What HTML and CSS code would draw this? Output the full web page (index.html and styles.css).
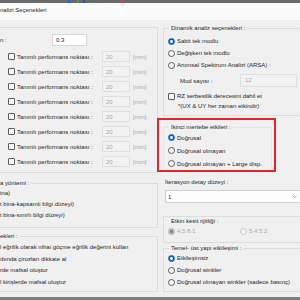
FILE: index.html
```html
<!DOCTYPE html>
<html lang="tr">
<head>
  <meta charset="UTF-8">
  <title>Analizi Seçenekleri</title>
  <link rel="stylesheet" href="styles.css">
</head>
<body>
  <div class="desk-top"></div>
  <div class="titlebar">nalizi Seçenekleri</div>

  <div class="dialog">
    <!-- SOL SÜTUN -->
    <div class="col-left">
      <div class="group g-perf">
        <div class="row-n">
          <span class="lbl-n">n :</span>
          <span class="input">0.3</span>
        </div>
        <div class="perf-list">
          <div class="perf-row"><span class="check"></span><span class="perf-lbl">Tanımlı performans noktası :</span><span class="input off">20</span><span class="unit">[mm]</span></div>
          <div class="perf-row"><span class="check"></span><span class="perf-lbl">Tanımlı performans noktası :</span><span class="input off">20</span><span class="unit">[mm]</span></div>
          <div class="perf-row"><span class="check"></span><span class="perf-lbl">Tanımlı performans noktası :</span><span class="input off">20</span><span class="unit">[mm]</span></div>
          <div class="perf-row"><span class="check"></span><span class="perf-lbl">Tanımlı performans noktası :</span><span class="input off">20</span><span class="unit">[mm]</span></div>
          <div class="perf-row"><span class="check"></span><span class="perf-lbl">Tanımlı performans noktası :</span><span class="input off">20</span><span class="unit">[mm]</span></div>
          <div class="perf-row"><span class="check"></span><span class="perf-lbl">Tanımlı performans noktası :</span><span class="input off">20</span><span class="unit">[mm]</span></div>
          <div class="perf-row"><span class="check"></span><span class="perf-lbl">Tanımlı performans noktası :</span><span class="input off">20</span><span class="unit">[mm]</span></div>
          <div class="perf-row"><span class="check"></span><span class="perf-lbl">Tanımlı performans noktası :</span><span class="input off">20</span><span class="unit">[mm]</span></div>
        </div>
      </div>

      <div class="group g-method">
        <span class="group-title">a yöntemi :</span>
        <div class="list">
          <div class="item">ina)</div>
          <div class="item">t bina-kapsamlı bilgi düzeyi)</div>
          <div class="item">t bina-sınırlı bilgi düzeyi)</div>
        </div>
      </div>

      <div class="group g-extra">
        <span class="group-title">ekleri :</span>
        <div class="list">
          <div class="item tall">l eğrilik olarak nihai göçme eğrilik değerini kullan</div>
          <div class="item tall">ıbında çirozları dikkate al</div>
          <div class="item tall">rde mafsal oluştur</div>
          <div class="item tall">l kirişlerde mafsal oluştur</div>
        </div>
      </div>
    </div>

    <!-- SAĞ SÜTUN -->
    <div class="col-right">
      <div class="group g-dyn">
        <span class="group-title">Dinamik analiz seçenekleri :</span>
        <div class="radios">
          <div class="opt"><span class="radio on"></span>Sabit tek modlu</div>
          <div class="opt"><span class="radio"></span>Değişken tek modlu</div>
          <div class="opt"><span class="radio"></span>Artımsal Spektrum Analizi (ARSA) :</div>
        </div>
        <div class="mod-row">
          <span class="mod-lbl">Mod sayısı :</span>
          <span class="input off wide">12</span>
        </div>
        <div class="rz-row"><span class="check"></span>RZ serbestlik derecesini dahil et</div>
        <div class="note">*(UX &amp; UY her zaman etkindir)</div>
      </div>

      <div class="marked">
        <div class="group g-second">
          <span class="group-title">İkinci mertebe etkileri :</span>
          <div class="opt big"><span class="radio on"></span>Doğrusal</div>
          <div class="opt big"><span class="radio"></span>Doğrusal olmayan</div>
          <div class="opt big"><span class="radio"></span>Doğrusal olmayan + Large disp.</div>
        </div>
      </div>

      <div class="iter-lbl">İterasyon detay düzeyi :</div>
      <div class="combo">
        <span>1</span>
        <svg width="5" height="3" viewBox="0 0 5 3"><path d="M0.5 0.5 L2.5 2.5 L4.5 0.5" fill="none" stroke="#8a8a8a" stroke-width="0.8"/></svg>
      </div>

      <div class="group g-rij">
        <span class="group-title">Etkin kesit rijitliği :</span>
        <div class="rij-row">
          <div class="opt dis first"><span class="radio dis on"></span>4.5.8.1</div>
          <div class="opt dis"><span class="radio dis"></span>5.4.5.2</div>
        </div>
      </div>

      <div class="group g-temel">
        <span class="group-title">Temel- üst yapı etkileşimi :</span>
        <div class="opt"><span class="radio on"></span>Etkileşimsiz</div>
        <div class="opt"><span class="radio"></span>Doğrusal winkler</div>
        <div class="opt"><span class="radio"></span>Doğrusal olmayan winkler (sadece basınç)</div>
      </div>
    </div>
  </div>

  <div class="desk-bottom"></div>
</body>
</html>
```

FILE: styles.css
```css
body {
  margin: 0;
  width: 300px;
  height: 300px;
  overflow: hidden;
  background-color: #f0f0f0;
  font-family: "Liberation Sans", Arial, sans-serif;
  font-size: 6px;
  color: #262626;
  display: flex;
  flex-direction: column;
}

.desk-top {
  height: 3px;
  flex-shrink: 0;
  background: linear-gradient(90deg, #6a6a6a 0 68px, #3b5fc0 68px 71px, #6a6a6a 71px 77px, #4aa04a 77px 79px, #6a6a6a 79px 83px, #2a4fb0 83px 85px, #6a6a6a 85px 121px, #d04a4a 121px 123px, #6a6a6a 123px);
}

.titlebar {
  height: 17px;
  line-height: 14px;
  background-color: #fbfbfb;
  flex-shrink: 0;
}

.dialog {
  display: flex;
  gap: 5px;
  padding-top: 7px;
}

.col-left {
  width: 158px;
  flex-shrink: 0;
}

.col-right {
  width: 150px;
  flex-shrink: 0;
  margin-top: 1px;
}

/* grup kutuları */
.group {
  border: 1px solid #dcdcdc;
}

.col-left .group {
  border-left: none;
}

.group-title {
  display: block;
  width: fit-content;
  margin-top: -5px;
  line-height: 8px;
  padding: 0 2px;
  background-color: #f0f0f0;
}

.col-left .group-title {
  padding-left: 0;
}

.col-right .group-title {
  margin-left: 1px;
}

/* kontroller */
.input {
  display: inline-block;
  box-sizing: border-box;
  height: 12px;
  line-height: 10px;
  padding-left: 3px;
  border: 1px solid #d6d6d6;
  background-color: #fff;
}

.input.off {
  color: #a8a8a8;
  background-color: #f2f2f2;
  border-color: #dedede;
  width: 28px;
}

.check {
  display: inline-block;
  box-sizing: border-box;
  width: 7px;
  height: 7px;
  border: 1px solid #5a5a5a;
  border-radius: 1px;
  background-color: #fafafa;
  flex-shrink: 0;
}

.radio {
  display: inline-block;
  box-sizing: border-box;
  width: 7px;
  height: 7px;
  border: 1px solid #5a5a5a;
  border-radius: 50%;
  background-color: #fafafa;
  flex-shrink: 0;
}

.radio.on {
  border-color: #0a5fb4;
  background: radial-gradient(circle, #fff 0 1.2px, #0a5fb4 1.7px);
}

.radio.dis {
  border-color: #c4c4c4;
  background-color: #f4f4f4;
}

.radio.dis.on {
  border-color: #a9a9a9;
  background: radial-gradient(circle, #808080 0 1.3px, #c9c9c9 1.8px);
}

.opt {
  height: 12px;
  display: flex;
  align-items: center;
  gap: 2px;
}

.opt.big {
  height: 13px;
}

.opt.dis {
  color: #a8a8a8;
}

/* sol: performans noktaları */
.g-perf {
  padding: 5px 0 3px;
}

.row-n {
  height: 14px;
  display: flex;
  align-items: center;
}

.lbl-n {
  width: 52px;
}

.row-n .input {
  width: 35px;
}

.perf-list {
  margin-top: 2px;
}

.perf-row {
  height: 15px;
  display: flex;
  align-items: center;
  padding-left: 8px;
}

.perf-lbl {
  width: 85px;
  padding-left: 2px;
}

.perf-row .input {
  height: 11px;
}

.unit {
  margin-left: 3px;
  color: #a8a8a8;
}

.g-method {
  margin-top: 10px;
  padding-bottom: 6px;
}

.g-method .list {
  margin-top: 1px;
}

.item {
  height: 11px;
  line-height: 11px;
  white-space: nowrap;
}

.item.tall {
  height: 11.5px;
  line-height: 11.5px;
}

.g-extra {
  margin-top: 8px;
  padding-bottom: 3px;
}

.g-extra .list {
  margin-top: 2px;
}

/* sağ: dinamik analiz */
.g-dyn {
  padding: 0 0 4px 4px;
}

.radios {
  margin-top: 3px;
}

.mod-row {
  margin-top: 3px;
  height: 13px;
  display: flex;
  align-items: center;
}

.mod-lbl {
  margin-left: 12px;
  width: 60px;
}

.input.wide {
  width: 57px;
  height: 13px;
  line-height: 11px;
  padding-left: 4px;
}

.rz-row {
  margin-top: 4px;
  height: 10px;
  display: flex;
  align-items: center;
  gap: 2px;
}

.note {
  height: 10px;
  line-height: 10px;
  margin-left: 10px;
}

/* kırmızı işaretli alan */
.marked {
  margin-top: 2px;
  margin-left: -6px;
  width: 119px;
  box-sizing: border-box;
  border: 2px solid #e3242b;
  padding: 7px 2px 0 4px;
}

.g-second {
  border-color: #e6e6e6;
  border-bottom: none;
  padding-left: 4px;
}

.iter-lbl {
  margin-top: 6px;
  margin-left: 2px;
  line-height: 8px;
}

.combo {
  margin-top: 4px;
  margin-left: 2px;
  width: 136px;
  height: 13px;
  box-sizing: border-box;
  border: 1px solid #cfcfcf;
  background-color: #fdfdfd;
  display: flex;
  align-items: center;
  justify-content: space-between;
  padding: 0 3px 0 2px;
}

.g-rij {
  margin-top: 13px;
  padding: 5px 0 5px 4px;
}

.rij-row {
  display: flex;
}

.opt.first {
  width: 72px;
}

.g-temel {
  margin-top: 5px;
  padding: 0 0 3px 4px;
}

.desk-bottom {
  margin-top: auto;
  height: 3px;
  flex-shrink: 0;
  background-color: #7e7e7e;
}
```
